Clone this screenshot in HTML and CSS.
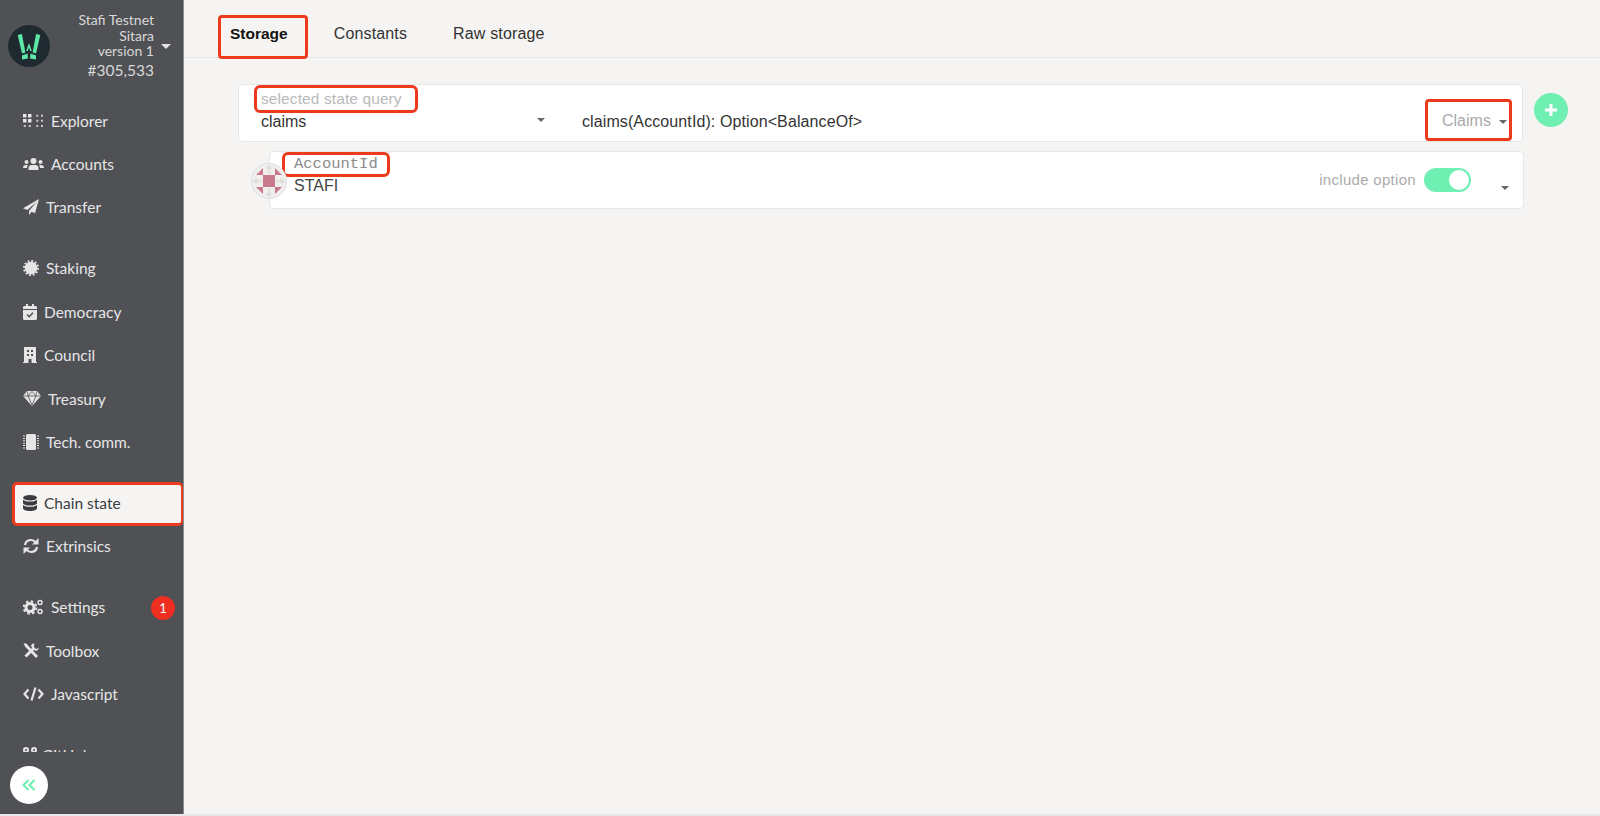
FILE: index.html
```html
<!DOCTYPE html>
<html lang="en">
<head>
    <meta charset="UTF-8">
    <title>Chain state</title>
    <link rel="stylesheet" href="styles.css">
</head>
<body>
    <div class="app">
        <aside class="sidebar">
            <div class="chain-head">
                <svg class="logo" viewBox="0 0 42 42">
                    <circle cx="21" cy="21" r="21" fill="#1f2a30"/>
                    <path d="M9.700 10l4.200-1 3.500 18.500-3.400 1zM32.300 10l-4.200-1-3.500 18.500 3.400 1z" fill="#5ee8a8"/>
                    <path d="M14 30.500l5.500-2 .5 5-6 1zM28 30.500l-5.500-2-.5 5 6 1z" fill="#5ee8a8"/>
                    <path d="M21 18l2.800 8h-1.600L21 22.500 19.800 26h-1.600z" fill="#5ee8a8"/>
                </svg>
                <div class="chain-info">
                    <div>Stafi Testnet</div>
                    <div>Sitara</div>
                    <div>version 1</div>
                    <div class="chain-block">#305,533</div>
                </div>
                <span class="chain-caret"></span>
            </div>

            <nav class="nav">
                <a class="nav-item"><svg class="icon" width="21" height="16" viewBox="0 0 21 16" fill="#e6e6e6"><path d="M0 1h3.500v3.500H0zM5 1h3.500v3.500H5zM0 6h3.500v3.500H0zM5 6h3.500v3.500H5z"/><path d="M.8 12h2v2h-2zM5.800 12h2v2h-2zM13.300 1.700h2v2h-2zM18 1.700h2v2h-2zM13.300 6.700h2v2h-2zM18 6.700h2v2h-2zM13.300 12h2v2h-2zM18 12h2v2h-2z" opacity=".8"/></svg>Explorer</a>
                <a class="nav-item"><svg class="icon" width="21" height="16" viewBox="0 0 21 16" fill="#e6e6e6"><circle cx="10.500" cy="5" r="3"/><circle cx="3.500" cy="6" r="2"/><circle cx="17.500" cy="6" r="2"/><path d="M5.500 14v-2c0-2 1.500-3 3-3h4c1.500 0 3 1 3 3v2z"/><path d="M0 12c0-2 1-3 3-3h2c-.8.800-1 2-1 3zM21 12c0-2-1-3-3-3h-2c.8.800 1 2 1 3z"/></svg>Accounts</a>
                <a class="nav-item"><svg class="icon" width="16" height="16" viewBox="0 0 16 16" fill="#e6e6e6"><path d="M16 0L0 9.200l4.300 1.800L13.500 3 6 12v4l2.600-3.200 3.400 1.400z"/></svg>Transfer</a>
                <div class="nav-gap"></div>
                <a class="nav-item"><svg class="icon" width="16" height="16" viewBox="0 0 16 16" fill="#e6e6e6"><circle cx="8" cy="8" r="6.300"/><circle cx="8" cy="8" r="7" fill="none" stroke="#e6e6e6" stroke-width="2" stroke-dasharray="1.800 1.870"/></svg>Staking</a>
                <a class="nav-item"><svg class="icon" width="14" height="16" viewBox="0 0 14 16"><path d="M3 0h2v2h4V0h2v2h1.500C13.400 2 14 2.600 14 3.500V5H0V3.500C0 2.600.6 2 1.500 2H3zM0 6h14v8.500c0 .9-.6 1.500-1.500 1.500h-11C.6 16 0 15.400 0 14.500z" fill="#e6e6e6"/><path d="M4 10.500l2.200 2.200L10 8.800" fill="none" stroke="#4f5155" stroke-width="1.500"/></svg>Democracy</a>
                <a class="nav-item"><svg class="icon" width="14" height="16" viewBox="0 0 14 16"><path d="M1 0h12v15h1v1H0v-1h1z" fill="#e6e6e6"/><path d="M4 3h2v2H4zM8 3h2v2H8zM4 7h2v2H4zM8 7h2v2H8zM5.500 12h3v4h-3z" fill="#4f5155"/></svg>Council</a>
                <a class="nav-item"><svg class="icon" width="18" height="15" viewBox="0 0 18 15"><path d="M4 0h10l4 5-9 10L0 5z" fill="#e6e6e6"/><path d="M0 5h18M5 5l4 9 4-9M4.500 .5L5 5l4-4.500 4 4.500 .5-4.500" fill="none" stroke="#4f5155" stroke-width=".8"/></svg>Treasury</a>
                <a class="nav-item"><svg class="icon" width="16" height="16" viewBox="0 0 16 16"><rect x="3" y="0" width="10" height="16" rx="1.500" fill="#e6e6e6"/><path d="M1 1.500v13M15 1.500v13" stroke="#e6e6e6" stroke-width="2" stroke-dasharray="1 1.400"/></svg>Tech. comm.</a>
                <div class="nav-gap"></div>
                <a class="nav-item nav-item-active"><svg class="icon" width="14" height="16" viewBox="0 0 14 16" fill="#3a3c40"><ellipse cx="7" cy="2.800" rx="7" ry="2.800"/><path d="M0 4.800c1.500 1.300 4 1.800 7 1.800s5.500-.5 7-1.800V8c0 1.500-3 2.600-7 2.600S0 9.500 0 8z"/><path d="M0 10c1.500 1.300 4 1.800 7 1.800s5.500-.5 7-1.800v3.200C14 14.700 11 16 7 16s-7-1.300-7-2.800z"/></svg>Chain state</a>
                <a class="nav-item"><svg class="icon" width="16" height="16" viewBox="0 0 16 16" fill="none" stroke="#e6e6e6" stroke-width="2.200"><path d="M2 7c.5-3 3-5 6-5 2 0 3.500 1 4.500 2.300"/><path d="M14 9c-.5 3-3 5-6 5-2 0-3.500-1-4.500-2.300"/><path d="M15.500 0v6.500H9zM.5 16V9.500H7z" fill="#e6e6e6" stroke="none"/></svg>Extrinsics</a>
                <div class="nav-gap"></div>
                <a class="nav-item"><svg class="icon" width="21" height="16" viewBox="0 0 21 16" fill="none" stroke="#e6e6e6"><circle cx="7" cy="8.500" r="4" stroke-width="3"/><circle cx="7" cy="8.500" r="6.300" stroke-width="2" stroke-dasharray="2.500 2.450"/><circle cx="17" cy="3.500" r="2" stroke-width="1.500"/><circle cx="17" cy="12.500" r="2" stroke-width="1.500"/></svg>Settings<span class="nav-badge">1</span></a>
                <a class="nav-item"><svg class="icon" width="16" height="16" viewBox="0 0 16 16" fill="none" stroke="#e6e6e6"><path d="M2.500 2l11.500 12" stroke-width="2.800"/><path d="M11 5L2.500 13.500" stroke-width="3"/><path d="M.5 1.500L2 0l3 2-1 2zM11.500 0.500c-2-.5-3.800 1.200-3.300 3.300l4 4c2.100.5 3.800-1.300 3.300-3.300l-2.200 1.700-2.500-2.500z" fill="#e6e6e6" stroke="none"/></svg>Toolbox</a>
                <a class="nav-item"><svg class="icon" width="21" height="16" viewBox="0 0 21 16" fill="none" stroke="#e6e6e6" stroke-width="2.200"><path d="M5.500 3.500L1.500 8l4 4.500M15.500 3.500l4 4.500-4 4.500M12.500 1.500L8.500 14.500"/></svg>Javascript</a>
                <div class="nav-gap"></div>
                <a class="nav-item"><svg class="icon nav-icon-tight" width="14" height="16" viewBox="0 0 14 16" fill="none" stroke="#e6e6e6" stroke-width="2"><circle cx="3" cy="3" r="2"/><circle cx="11" cy="3" r="2"/><circle cx="3" cy="13" r="2"/><path d="M3 5v6M11 5c0 3-8 2-8 5"/></svg>GitHub</a>
            </nav>

            <button class="collapse-btn">
                <svg width="14" height="12" viewBox="0 0 14 12" fill="none" stroke="#6fefb2" stroke-width="2.200"><path d="M6.500 1L1.500 6l5 5M12.500 1L7.500 6l5 5"/></svg>
            </button>
        </aside>

        <main class="content">
            <div class="tabs">
                <a class="tab tab-active mark">Storage</a>
                <a class="tab">Constants</a>
                <a class="tab">Raw storage</a>
            </div>

            <div class="query-row">
                <div class="card query-card">
                    <div class="query-key">
                        <div class="field-label"><span class="mark mark-label">selected state query</span></div>
                        <div class="field-value">claims</div>
                        <span class="caret query-key-caret"></span>
                    </div>
                    <div class="query-type">claims(AccountId): Option&lt;BalanceOf&gt;</div>
                    <div class="query-section mark">Claims<span class="caret"></span></div>
                </div>
                <button class="add-btn">
                    <svg width="14" height="14" viewBox="0 0 14 14"><path d="M7 1v12M1 7h12" stroke="#fff" stroke-width="3"/></svg>
                </button>
            </div>

            <div class="param-row">
                <svg class="identicon" viewBox="0 0 36 36">
                    <circle cx="18" cy="18" r="17.500" fill="#f1eeee" stroke="#dddddd"/>
                    <path d="M18 2l3 3-3 3-3-3zM18 8l2.500 2.500h-5zM2 18l3-3 3 3-3 3zM8 18l2.500-2.500v5zM34 18l-3-3-3 3 3 3zM28 18l-2.500-2.500v5zM18 34l3-3-3-3-3 3zM18 28l2.500-2.500h-5z" fill="#dfdcdc"/>
                    <path d="M5 12l7-7v7zM31 12l-7-7v7zM5 24l7 7v-7zM31 24l-7 7v-7z" fill="#c9798e"/>
                    <rect x="12" y="12" width="12" height="12" fill="#c9798e"/>
                </svg>
                <div class="card param-card">
                    <div class="param-main">
                        <div class="param-label"><span class="mark mark-param">AccountId</span></div>
                        <div class="param-value">STAFI</div>
                    </div>
                    <span class="include-label">include option</span>
                    <span class="toggle"><span class="toggle-knob"></span></span>
                    <span class="caret param-caret"></span>
                </div>
            </div>
        </main>
    </div>
</body>
</html>
```

FILE: styles.css
```css
* {
    box-sizing: border-box;
}
html, body {
    margin: 0;
    height: 100%;
    overflow: hidden;
}
body {
    font-family: "Liberation Sans", Arial, sans-serif;
    background-color: #e9e9e9;
}
.app {
    display: flex;
    height: 814px;
}
.sidebar {
    position: relative;
    flex: 0 0 184px;
    background-color: #4f5155;
    border-right: 1px solid #8b8c8e;
    color: #e6e6e6;
    font-family: Lato, sans-serif;
}
.chain-head {
    display: flex;
    height: 100px;
    padding: 12px 0 0 8px;
}
.logo {
    width: 42px;
    height: 42px;
    margin-top: 13px;
}
.chain-info {
    width: 104px;
    text-align: right;
    font-size: 14px;
    line-height: 15.500px;
    color: #d8d8d8;
}
.chain-block {
    font-size: 15.500px;
    line-height: 22px;
}
.chain-caret {
    width: 0;
    height: 0;
    margin: 32px 0 0 7px;
    border-style: solid;
    border-width: 5px 5px 0;
    border-color: #e6e6e6 transparent transparent;
}
.nav {
    height: 652px;
    overflow: hidden;
}
.nav-item {
    position: relative;
    display: flex;
    align-items: center;
    gap: 7px;
    height: 43.400px;
    padding: 0 0 2px 23px;
    font-size: 15.500px;
    color: #e6e6e6;
}
.nav-gap {
    height: 17.600px;
}
.icon {
    flex: none;
}
.nav-icon-tight {
    margin-right: -2px;
}
.nav-item-active {
    margin-left: 12px;
    padding-left: 8px;
    background-color: #f5f4f2;
    color: #3a3c40;
    border: 3px solid #ee3a1c;
    border-right-width: 2px;
    border-radius: 5px;
}
.nav-badge {
    position: absolute;
    left: 151px;
    top: 9px;
    width: 24px;
    height: 24px;
    border-radius: 50%;
    background-color: #ee2e20;
    color: #fff;
    font-size: 13px;
    line-height: 24px;
    text-align: center;
}
.collapse-btn {
    position: absolute;
    left: 10px;
    top: 766px;
    display: flex;
    align-items: center;
    justify-content: center;
    width: 38px;
    height: 38px;
    padding: 0;
    border: none;
    border-radius: 50%;
    background-color: #fff;
}
.content {
    flex: 1;
    background-color: #f5f4f2;
}
.tabs {
    display: flex;
    align-items: flex-start;
    height: 58px;
    padding: 15px 0 0 34px;
    border-bottom: 1px solid #e8e8e8;
    font-size: 16px;
    letter-spacing: .15px;
    line-height: 18px;
    color: #333;
}
.tab {
    padding: 10px 0;
    margin-right: 46px;
}
.tab-active {
    font-weight: bold;
    font-size: 15.500px;
    letter-spacing: 0;
    color: #111;
}
.mark {
    outline: 3px solid #ee3a1c;
    border-radius: 4px;
}
.tab.mark {
    padding: 10px 20px 16px 12px;
    margin-right: 26px;
    outline-offset: -3px;
}
.query-row {
    display: flex;
    align-items: flex-start;
    gap: 11px;
    padding: 26px 32px 0 54px;
}
.card {
    background-color: #fff;
    border: 1px solid #e6e6e6;
    border-radius: 4px;
}
.query-card {
    position: relative;
    display: flex;
    flex: 1;
    height: 58px;
}
.query-key {
    position: relative;
    width: 343px;
    padding: 2px 0 0 22px;
}
.field-label {
    font-size: 15.500px;
    letter-spacing: .1px;
    line-height: 22px;
    color: #b9b9b9;
}
.mark-label {
    display: inline-block;
    padding: 1px 14px 1px 5px;
    margin-left: -5px;
    line-height: 22px;
    outline-offset: -1px;
}
.field-value {
    font-size: 16px;
    line-height: 18px;
    margin-top: 2px;
    color: #333;
}
.caret {
    display: inline-block;
    width: 0;
    height: 0;
    border-style: solid;
    border-width: 4px 4px 0;
    border-color: #666 transparent transparent;
}
.query-key-caret {
    position: absolute;
    left: 298px;
    top: 33px;
}
.query-type {
    flex: 1;
    padding-top: 28px;
    font-size: 16px;
    letter-spacing: .1px;
    line-height: 18px;
    color: #333;
}
.query-section {
    position: absolute;
    right: 10px;
    top: 14px;
    width: 87px;
    height: 42px;
    padding: 13px 0 0 17px;
    font-size: 16px;
    line-height: 18px;
    color: #a9a9a9;
    outline-offset: -3px;
}
.query-section .caret {
    margin: 0 0 2px 8px;
}
.add-btn {
    display: flex;
    align-items: center;
    justify-content: center;
    width: 34px;
    height: 34px;
    margin-top: 9px;
    padding: 0;
    border: none;
    border-radius: 50%;
    background-color: #6fefb2;
}
.param-row {
    position: relative;
    display: flex;
    margin: 9px 76px 0 85px;
}
.identicon {
    position: absolute;
    left: -18px;
    top: 12px;
    width: 36px;
    height: 36px;
    z-index: 1;
}
.param-card {
    display: flex;
    align-items: flex-start;
    flex: 1;
    height: 58px;
}
.param-main {
    flex: 1;
    padding: 0 0 0 24px;
}
.param-label {
    height: 25px;
    padding-top: 2px;
    font-family: "Liberation Mono", monospace;
    font-size: 15.500px;
    line-height: 19px;
    color: #8b8b8b;
}
.mark-param {
    display: inline-block;
    margin-left: -10px;
    padding: 1px 10px 1px 10px;
    outline-offset: -1px;
}
.param-value {
    font-size: 16px;
    line-height: 18px;
    color: #444;
}
.include-label {
    margin-top: 19px;
    font-size: 15px;
    line-height: 18px;
    color: #ababab;
    letter-spacing: .3px;
}
.toggle {
    position: relative;
    width: 47px;
    height: 24px;
    margin: 16px 0 0 8px;
    border-radius: 12px;
    background-color: #6fefb2;
}
.toggle-knob {
    position: absolute;
    right: 2px;
    top: 2px;
    width: 20px;
    height: 20px;
    border-radius: 50%;
    background-color: #fff;
}
.param-caret {
    margin: 34px 14px 0 30px;
}
```
